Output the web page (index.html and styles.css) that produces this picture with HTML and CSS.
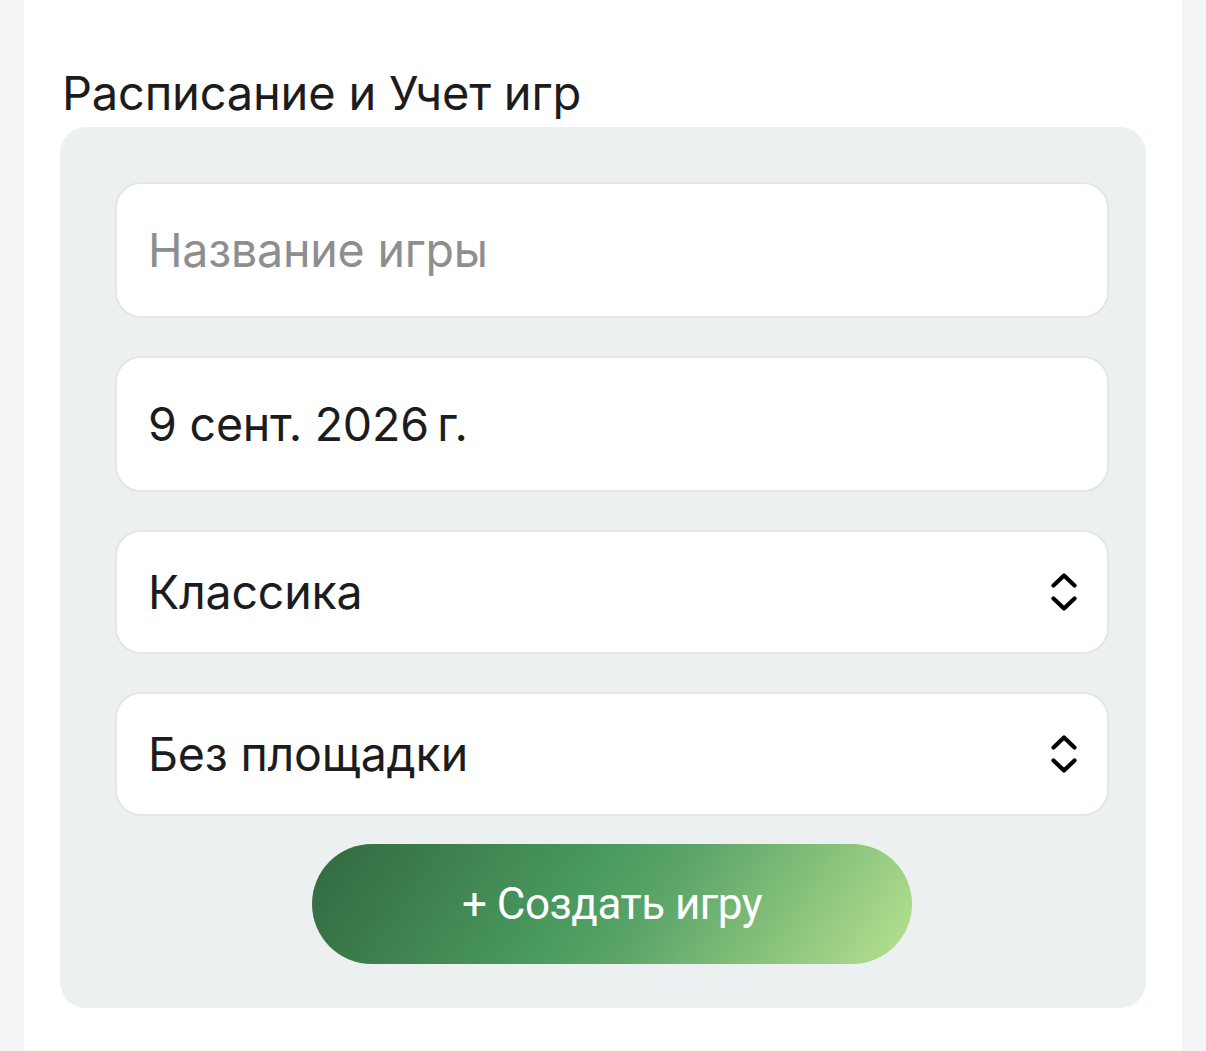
FILE: index.html
```html
<!DOCTYPE html>
<html lang="ru">
<head>
<meta charset="utf-8">
<link rel="stylesheet" href="styles.css">
</head>
<body>
<div class="page">
  <main class="sheet">
    <h2 class="title">Расписание и Учет игр</h2>
    <section class="panel">
      <div class="field tall"><span class="placeholder">Название игры</span></div>
      <div class="field tall"><span class="value">9 сент. 2026&#8239;г.</span></div>
      <div class="field select"><span class="value">Классика</span>
        <svg class="chev" viewBox="0 0 26 40" width="26" height="40"><path d="M2.5 13.5 L13 3.5 L23.5 13.5 M2.5 26.5 L13 36.5 L23.5 26.5" fill="none" stroke="#000" stroke-width="4.2" stroke-linecap="round" stroke-linejoin="round"/></svg>
      </div>
      <div class="field select"><span class="value">Без площадки</span>
        <svg class="chev" viewBox="0 0 26 40" width="26" height="40"><path d="M2.5 13.5 L13 3.5 L23.5 13.5 M2.5 26.5 L13 36.5 L23.5 26.5" fill="none" stroke="#000" stroke-width="4.2" stroke-linecap="round" stroke-linejoin="round"/></svg>
      </div>
      <div class="actions"><button class="create">+ Создать игру</button></div>
    </section>
  </main>
</div>
</body>
</html>
```
FILE: styles.css
```css
* { box-sizing: border-box; }
html, body { margin: 0; padding: 0; }
body {
  background: #f4f5f6;
  font-family: Inter, "Noto Sans", sans-serif;
  color: #1c1c1e;
}
.page {
  padding: 0 24px;
  height: 1051px;
}
.sheet {
  background: #ffffff;
  height: 100%;
  padding: 64px 36px 0 36px;
}
.title {
  margin: 0 0 0 2px;
  font-weight: 400;
  font-size: 47px;
  line-height: 58px;
  letter-spacing: -0.2px;
  color: #1c1c1e;
  height: 63px;
}
.panel {
  background: #edf0f1;
  border-radius: 26px;
  padding: 55px 37px 44px 55px;
  display: flex;
  flex-direction: column;
  gap: 38px;
}
.field {
  background: #ffffff;
  border: 2.5px solid #e4e6e8;
  border-radius: 26px;
  display: flex;
  align-items: center;
  padding: 0 30px 0 31px;
  font-size: 46.5px;
  letter-spacing: -0.2px;
}
.field.tall { height: 136px; }
.field.select { height: 124px; justify-content: space-between; }
.placeholder { color: #8e8e90; }
.value { color: #1c1c1e; }
.chev { display: block; margin-right: 0; }
.actions {
  display: flex;
  justify-content: center;
  margin-top: -10px;
}
.create {
  width: 600px;
  height: 120px;
  border: 0;
  border-radius: 60px;
  background: linear-gradient(125deg, #2e693c 0%, #356f43 6%, #4a9a5f 44%, #5aa468 56%, #b8e290 100%);
  color: #ffffff;
  font-family: Roboto, "Noto Sans", sans-serif;
  font-size: 44px;
  letter-spacing: -0.5px;
  padding: 0;
}
```
